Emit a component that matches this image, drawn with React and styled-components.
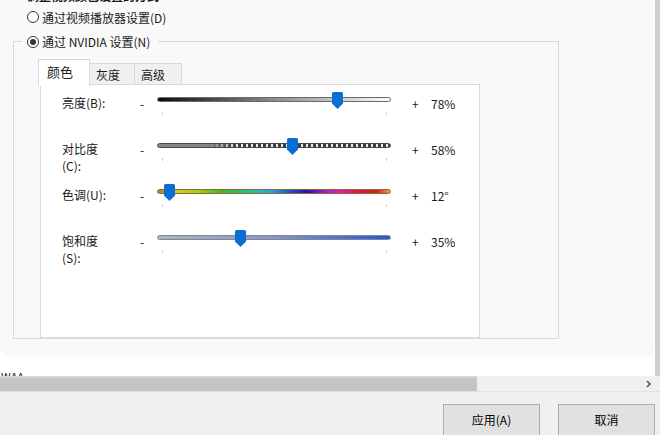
import React from 'react';
import styled, { createGlobalStyle } from 'styled-components';

const Global = createGlobalStyle`
  html, body { margin: 0; padding: 0; background: #fff; }
  body {
    font-family: "Noto Sans CJK SC", "Liberation Sans", sans-serif;
    font-size: 12px;
    color: #1a1a1a;
  }
`;

const sliders = [
  { label: ['亮度(B):'], value: 0.78, text: '78%', kind: 'brightness' },
  { label: ['对比度', '(C):'], value: 0.58, text: '58%', kind: 'contrast' },
  { label: ['色调(U):'], value: 12 / 360, text: '12°', kind: 'hue' },
  { label: ['饱和度', '(S):'], value: 0.35, text: '35%', kind: 'saturation' },
];

const tabs = [
  { name: '颜色', width: 52, active: true },
  { name: '灰度', width: 45 },
  { name: '高级', width: 47 },
];

const Window = styled.div`
  width: 660px;
  height: 435px;
  overflow: hidden;
  display: flex;
  flex-direction: column;
  background: #fff;
`;

const ScrollArea = styled.div`
  height: 376px;
  display: flex;
  flex-shrink: 0;
`;

const LeftCol = styled.div`
  width: 655px;
  display: flex;
  flex-direction: column;
`;

const VScroll = styled.div`
  width: 5px;
  background: #cfcfcf;
`;

const Card = styled.div`
  height: 357px;
  background: #f9f9f9;
  border-radius: 0 0 10px 10px;
  overflow: hidden;
`;

const Viewport = styled.div`
  height: 339px;
  overflow: hidden;
`;

const CutHeading = styled.div`
  margin-top: -13px;
  margin-left: 27px;
  height: 18px;
  line-height: 17px;
  font-weight: bold;
`;

const RadioRow = styled.div`
  height: 24px;
  display: flex;
  align-items: center;
  gap: 3px;
  padding-left: 27px;
`;

const Radio = styled.span`
  width: 12px;
  height: 12px;
  box-sizing: border-box;
  border: 1px solid #333;
  border-radius: 50%;
  background: #fff;
  display: flex;
  align-items: center;
  justify-content: center;
  &::after {
    content: '';
    width: 6px;
    height: 6px;
    border-radius: 50%;
    background: ${p => (p.$checked ? '#333' : 'transparent')};
  }
`;

const Group = styled.fieldset`
  margin: 0 0 0 13px;
  padding: 0;
  width: 546px;
  box-sizing: border-box;
  border: 1px solid #dadada;
  min-inline-size: 0;
`;

const Legend = styled.legend`
  margin-left: 8px;
  padding: 0 8px 0 5px;
  height: 25px;
  display: flex;
  align-items: center;
  gap: 3px;
`;

const Tabs = styled.div`
  margin: 4px 0 0 26px;
  width: 440px;
`;

const TabStrip = styled.div`
  display: flex;
  align-items: flex-end;
  height: 27px;
  margin-left: -2px;
  position: relative;
  z-index: 1;
`;

const Tab = styled.div`
  box-sizing: border-box;
  width: ${p => p.$width}px;
  height: ${p => (p.$active ? 27 : 22)}px;
  padding: ${p => (p.$active ? '0 0 3px 8px' : '0 0 0 6px')};
  display: flex;
  align-items: center;
  font-size: ${p => (p.$active ? 13 : 12)}px;
  background: ${p => (p.$active ? '#fff' : '#f0f0f0')};
  border: 1px solid #d9d9d9;
  border-bottom: ${p => (p.$active ? '1px solid #fff' : '1px solid #d9d9d9')};
  border-left: ${p => (p.$active ? '1px solid #d9d9d9' : 'none')};
  margin-bottom: ${p => (p.$active ? '-1px' : '0')};
`;

const TabPanel = styled.div`
  box-sizing: border-box;
  height: 254px;
  margin-top: -1px;
  background: #fff;
  border: 1px solid #d9d9d9;
  padding: 10px 0 0 21px;
`;

const Row = styled.div`
  height: 46px;
  display: grid;
  grid-template-columns: 77px 18px 234px 38px auto;
  align-items: start;
  line-height: 17px;
`;

const Label = styled.div`
  display: flex;
  flex-direction: column;
  margin-top: -1px;
`;

const Minus = styled.div`
  padding-left: 1px;
`;

const Plus = styled.div`
  padding-left: 21px;
`;

const Value = styled.div`
  padding-left: 2px;
`;

const SliderBox = styled.div`
  margin-top: -4px;
  height: 26px;
  display: flex;
  flex-direction: column;
`;

const TrackArea = styled.div`
  position: relative;
  height: 17px;
`;

const trackBg = {
  brightness: 'linear-gradient(to right, #0c0c0c, #8c8c8c 50%, #fdfdfd)',
  contrast:
    'linear-gradient(to right, #858585 0%, #858585 22%, rgba(133,133,133,0) 34%), repeating-linear-gradient(to right, #3d3d3d 0 3px, #ececec 3px 5px)',
  hue: 'linear-gradient(to right, #a8802c 0%, #d8c828 7%, #a8d020 16%, #40b830 28%, #20c0a0 40%, #30a8e0 48%, #2050d0 57%, #3010b0 64%, #a020c8 72%, #e020a8 78%, #d81838 88%, #d02020 94%, #e8a040 100%)',
  saturation: 'linear-gradient(to right, #b4b4b4, #8c96b8 50%, #2a58cc)',
};

const trackBorder = {
  brightness: '#6a6a6a',
  contrast: '#4a4a4a',
  hue: '#8a6a30',
  saturation: '#7a86a8',
};

const Track = styled.div`
  position: absolute;
  left: 0;
  right: 0;
  top: 6px;
  height: 5px;
  box-sizing: border-box;
  border-radius: 3px;
  border: 1px solid ${p => trackBorder[p.$kind]};
  background: ${p => trackBg[p.$kind]};
`;

const Thumb = styled.svg`
  position: absolute;
  top: 1px;
  width: 11px;
  height: 17px;
`;

const Ticks = styled.div`
  margin-top: 4px;
  height: 3px;
  display: flex;
  justify-content: space-between;
  padding: 0 4px 0 5px;
`;

const Tick = styled.span`
  width: 1px;
  height: 3px;
  background: #d0d0d0;
`;

const ClippedLine = styled.div`
  height: 19px;
  overflow: hidden;
  padding-left: 1px;
  font-size: 11px;
  line-height: 14px;
  & > span {
    display: block;
    margin-top: 12px;
  }
`;

const HScroll = styled.div`
  height: 15px;
  flex-shrink: 0;
  display: flex;
  align-items: stretch;
  background: #f0f0f0;
  border-bottom: 1px solid #e2e2e2;
`;

const HThumb = styled.div`
  width: 477px;
  background: linear-gradient(#d6d6d6 0 2px, #c4c4c4 2px);
`;

const HTrack = styled.div`
  flex: 1;
  display: flex;
  align-items: center;
  justify-content: flex-end;
  padding-right: 9px;
`;

const Arrow = styled.svg`
  width: 5px;
  height: 8px;
`;

const Footer = styled.div`
  flex: 1;
  background: #f0f0f0;
  display: flex;
  justify-content: flex-end;
  align-items: flex-start;
  gap: 18px;
  padding: 12px 5px 0 0;
`;

const Button = styled.div`
  width: 97px;
  height: 32px;
  box-sizing: border-box;
  background: #e1e1e1;
  border: 1px solid #adadad;
  display: flex;
  align-items: center;
  justify-content: center;
  padding-bottom: 1px;
  color: #000;
`;

function Slider({ kind, value }) {
  const left = 5 + value * 225 - 5.5;
  return (
    <SliderBox>
      <TrackArea>
        <Track $kind={kind} />
        <Thumb viewBox="0 0 11 17" style={{ left }}>
          <path d="M1.5 0 H9.5 Q11 0 11 1.5 V11.5 L5.5 17 L0 11.5 V1.5 Q0 0 1.5 0 Z" fill="#0a6fd4" />
        </Thumb>
      </TrackArea>
      <Ticks>
        <Tick />
        <Tick />
      </Ticks>
    </SliderBox>
  );
}

export default function App() {
  return (
    <Window>
      <Global />
      <ScrollArea>
        <LeftCol>
          <Card>
            <Viewport>
              <CutHeading>调整视频颜色设置的方式</CutHeading>
              <RadioRow>
                <Radio />
                通过视频播放器设置(D)
              </RadioRow>
              <Group>
                <Legend>
                  <Radio $checked />
                  通过 NVIDIA 设置(N)
                </Legend>
                <Tabs>
                  <TabStrip>
                    {tabs.map(t => (
                      <Tab key={t.name} $width={t.width} $active={t.active}>
                        {t.name}
                      </Tab>
                    ))}
                  </TabStrip>
                  <TabPanel>
                    {sliders.map(s => (
                      <Row key={s.kind}>
                        <Label>
                          {s.label.map(l => (
                            <span key={l}>{l}</span>
                          ))}
                        </Label>
                        <Minus>-</Minus>
                        <Slider kind={s.kind} value={s.value} />
                        <Plus>+</Plus>
                        <Value>{s.text}</Value>
                      </Row>
                    ))}
                  </TabPanel>
                </Tabs>
              </Group>
            </Viewport>
          </Card>
          <ClippedLine>
            <span>WAA</span>
          </ClippedLine>
        </LeftCol>
        <VScroll />
      </ScrollArea>
      <HScroll>
        <HThumb />
        <HTrack>
          <Arrow viewBox="0 0 5 8">
            <path d="M1 1 L4 4 L1 7" fill="none" stroke="#555" strokeWidth="1.6" />
          </Arrow>
        </HTrack>
      </HScroll>
      <Footer>
        <Button>应用(A)</Button>
        <Button>取消</Button>
      </Footer>
    </Window>
  );
}
